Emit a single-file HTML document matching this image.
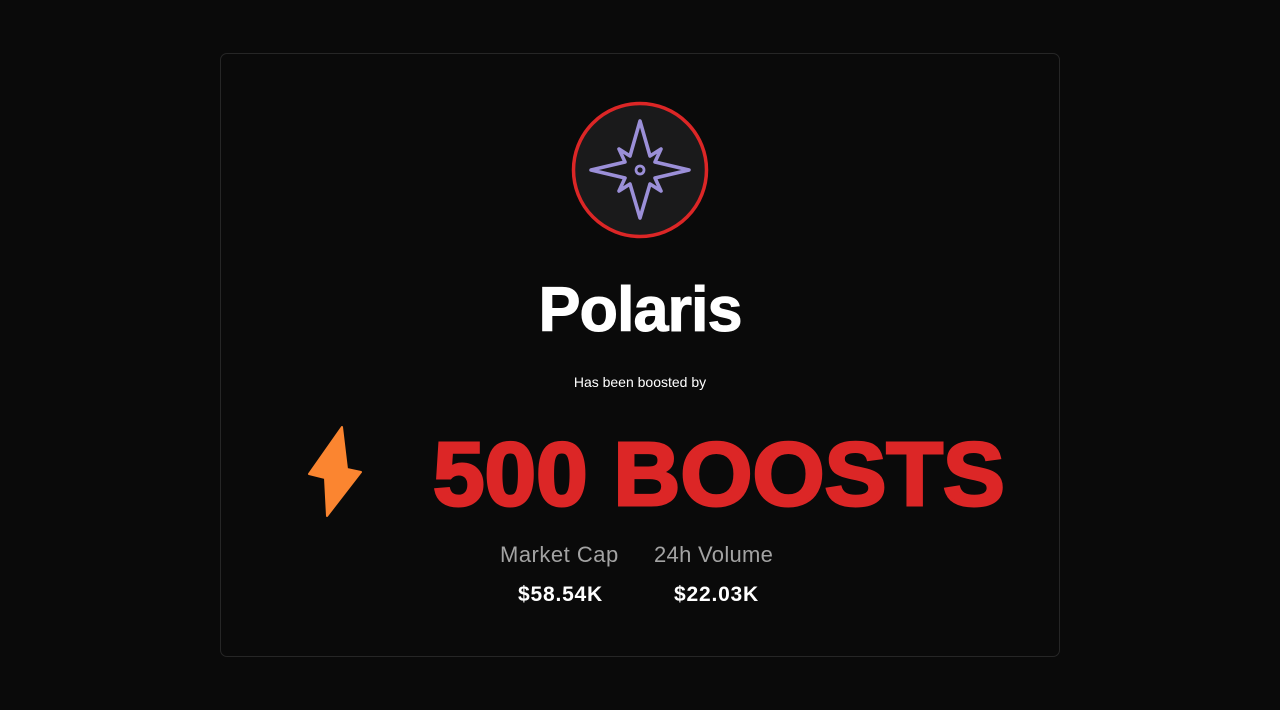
<!DOCTYPE html>
<html><head><style>
body{margin:0;background:#0a0a0a;width:1280px;height:710px;overflow:hidden;font-family:"Liberation Sans",sans-serif;position:relative}
.card{position:absolute;left:220px;top:53px;width:838px;height:602px;border:1px solid #262626;border-radius:7px;background:#0a0a0a}
.abs{position:absolute;white-space:nowrap}
</style></head><body>
<div class="card"></div>
<svg class="abs" style="left:0;top:0" width="1280" height="710">
<circle cx="640" cy="170" r="66.5" fill="#1a1a1b" stroke="#dc2626" stroke-width="3.5"/>
<path d="M640,121 L650,156 L661,149 L655,162 L689,170 L655,178 L661,191 L650,184 L640,218 L630,184 L619,191 L625,178 L591,170 L625,162 L619,149 L630,156 Z" fill="none" stroke="#9b8fd8" stroke-width="3.6" stroke-linejoin="round"/>
<circle cx="640" cy="170" r="4" fill="none" stroke="#9b8fd8" stroke-width="2.8"/>
<path d="M342,427 L309,474 L325,478 L327,516 L361,472 L347,469 Z" fill="#fb8530" stroke="#fb8530" stroke-width="2" stroke-linejoin="round"/>
</svg>
<div class="abs" style="left:0;width:1280px;text-align:center;top:274px;font-size:63px;font-weight:bold;color:#fff;letter-spacing:-1px;-webkit-text-stroke:1px #fff">Polaris</div>
<div class="abs" style="left:0;width:1280px;text-align:center;top:374px;font-size:14px;color:#fff">Has been boosted by</div>
<div class="abs" style="left:433px;top:424px;font-size:90px;font-weight:bold;color:#dc2626;-webkit-text-stroke:3px #dc2626;transform:scaleX(1.03);transform-origin:left">500 BOOSTS</div>
<div class="abs" style="left:500px;top:542px;font-size:22px;color:#a3a3a3;letter-spacing:0.5px">Market Cap</div>
<div class="abs" style="left:654px;top:542px;font-size:22px;color:#a3a3a3;letter-spacing:0.3px">24h Volume</div>
<div class="abs" style="left:518px;top:583px;font-size:21px;font-weight:bold;color:#fff;letter-spacing:0.8px">$58.54K</div>
<div class="abs" style="left:674px;top:583px;font-size:21px;font-weight:bold;color:#fff;letter-spacing:0.8px">$22.03K</div>
</body></html>
